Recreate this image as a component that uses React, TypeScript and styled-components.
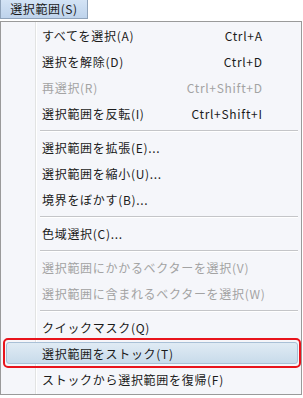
import styled, { createGlobalStyle } from "styled-components";

const GlobalStyle = createGlobalStyle`
  html, body {
    margin: 0;
    padding: 0;
    background: #ffffff;
  }
  body {
    font-family: "Noto Sans CJK JP", "Noto Sans", sans-serif;
    font-size: 12px;
    color: #1b1b1b;
  }
`;

// ボタン「選択範囲(S)」
const MenuTitle = styled.div`
  width: 86px;
  height: 18px;
  border: 1px solid #8fa3ba;
  border-top: none;
  background: linear-gradient(#d3e3f5, #bed3ec);
  display: flex;
  align-items: center;
  justify-content: center;
  font-size: 12px;
  letter-spacing: 0.6px;
  line-height: 1;
  color: #1a1a1a;
`;

const Panel = styled.div`
  margin-top: 2px;
  width: 300px;
  border: 1px solid #9a9a9a;
  background-color: #f5f6fa;
  background-image: linear-gradient(
    to right,
    transparent 34px,
    #e2e3e3 34px,
    #e2e3e3 35px,
    #ffffff 35px,
    #ffffff 36px,
    transparent 36px
  );
  padding: 0 0 2px 0;
  display: flex;
  flex-direction: column;
`;

const Item = styled.div<{ $disabled?: boolean; $active?: boolean }>`
  position: relative;
  height: 26px;
  display: flex;
  align-items: center;
  justify-content: space-between;
  padding: 0 39px 0 41px;
  letter-spacing: 0.7px;
  color: ${(p) => (p.$disabled ? "#a3a3a3" : "#1b1b1b")};
  white-space: nowrap;

  ${(p) =>
    p.$active &&
    `
    &::before {
      content: "";
      position: absolute;
      left: 5px;
      right: 3px;
      top: 2px;
      bottom: 2px;
      border: 1px solid #a9c0d6;
      border-radius: 3px;
      background: linear-gradient(#e0ebf4, #c8dbea);
    }
    &::after {
      content: "";
      position: absolute;
      left: 2px;
      right: 0px;
      top: -2px;
      bottom: -2px;
      border: 2px solid #e8141c;
      border-radius: 5px;
    }
  `}
`;

const Label = styled.span`
  position: relative;
  z-index: 1;
`;

const Shortcut = styled.span`
  position: relative;
  z-index: 1;
  margin-right: -0.7px;
`;

const Separator = styled.div`
  height: 8px;
  display: flex;
  align-items: center;
  padding: 0 3px 0 39px;

  &::before {
    content: "";
    flex: 1;
    height: 1px;
    background: #c4c5c8;
    box-shadow: 0 1px 0 #ffffff;
  }
`;

type Entry =
  | { label: string; shortcut?: string; disabled?: boolean; active?: boolean }
  | "sep";

const entries: Entry[] = [
  { label: "すべてを選択(A)", shortcut: "Ctrl+A" },
  { label: "選択を解除(D)", shortcut: "Ctrl+D" },
  { label: "再選択(R)", shortcut: "Ctrl+Shift+D", disabled: true },
  { label: "選択範囲を反転(I)", shortcut: "Ctrl+Shift+I" },
  "sep",
  { label: "選択範囲を拡張(E)..." },
  { label: "選択範囲を縮小(U)..." },
  { label: "境界をぼかす(B)..." },
  "sep",
  { label: "色域選択(C)..." },
  "sep",
  { label: "選択範囲にかかるベクターを選択(V)", disabled: true },
  { label: "選択範囲に含まれるベクターを選択(W)", disabled: true },
  "sep",
  { label: "クイックマスク(Q)" },
  { label: "選択範囲をストック(T)", active: true },
  { label: "ストックから選択範囲を復帰(F)" },
];

export default function App() {
  return (
    <>
      <GlobalStyle />
      <MenuTitle>選択範囲(S)</MenuTitle>
      <Panel>
        {entries.map((e, i) =>
          e === "sep" ? (
            <Separator key={i} />
          ) : (
            <Item key={i} $disabled={e.disabled} $active={e.active}>
              <Label>{e.label}</Label>
              {e.shortcut && <Shortcut>{e.shortcut}</Shortcut>}
            </Item>
          )
        )}
      </Panel>
    </>
  );
}
